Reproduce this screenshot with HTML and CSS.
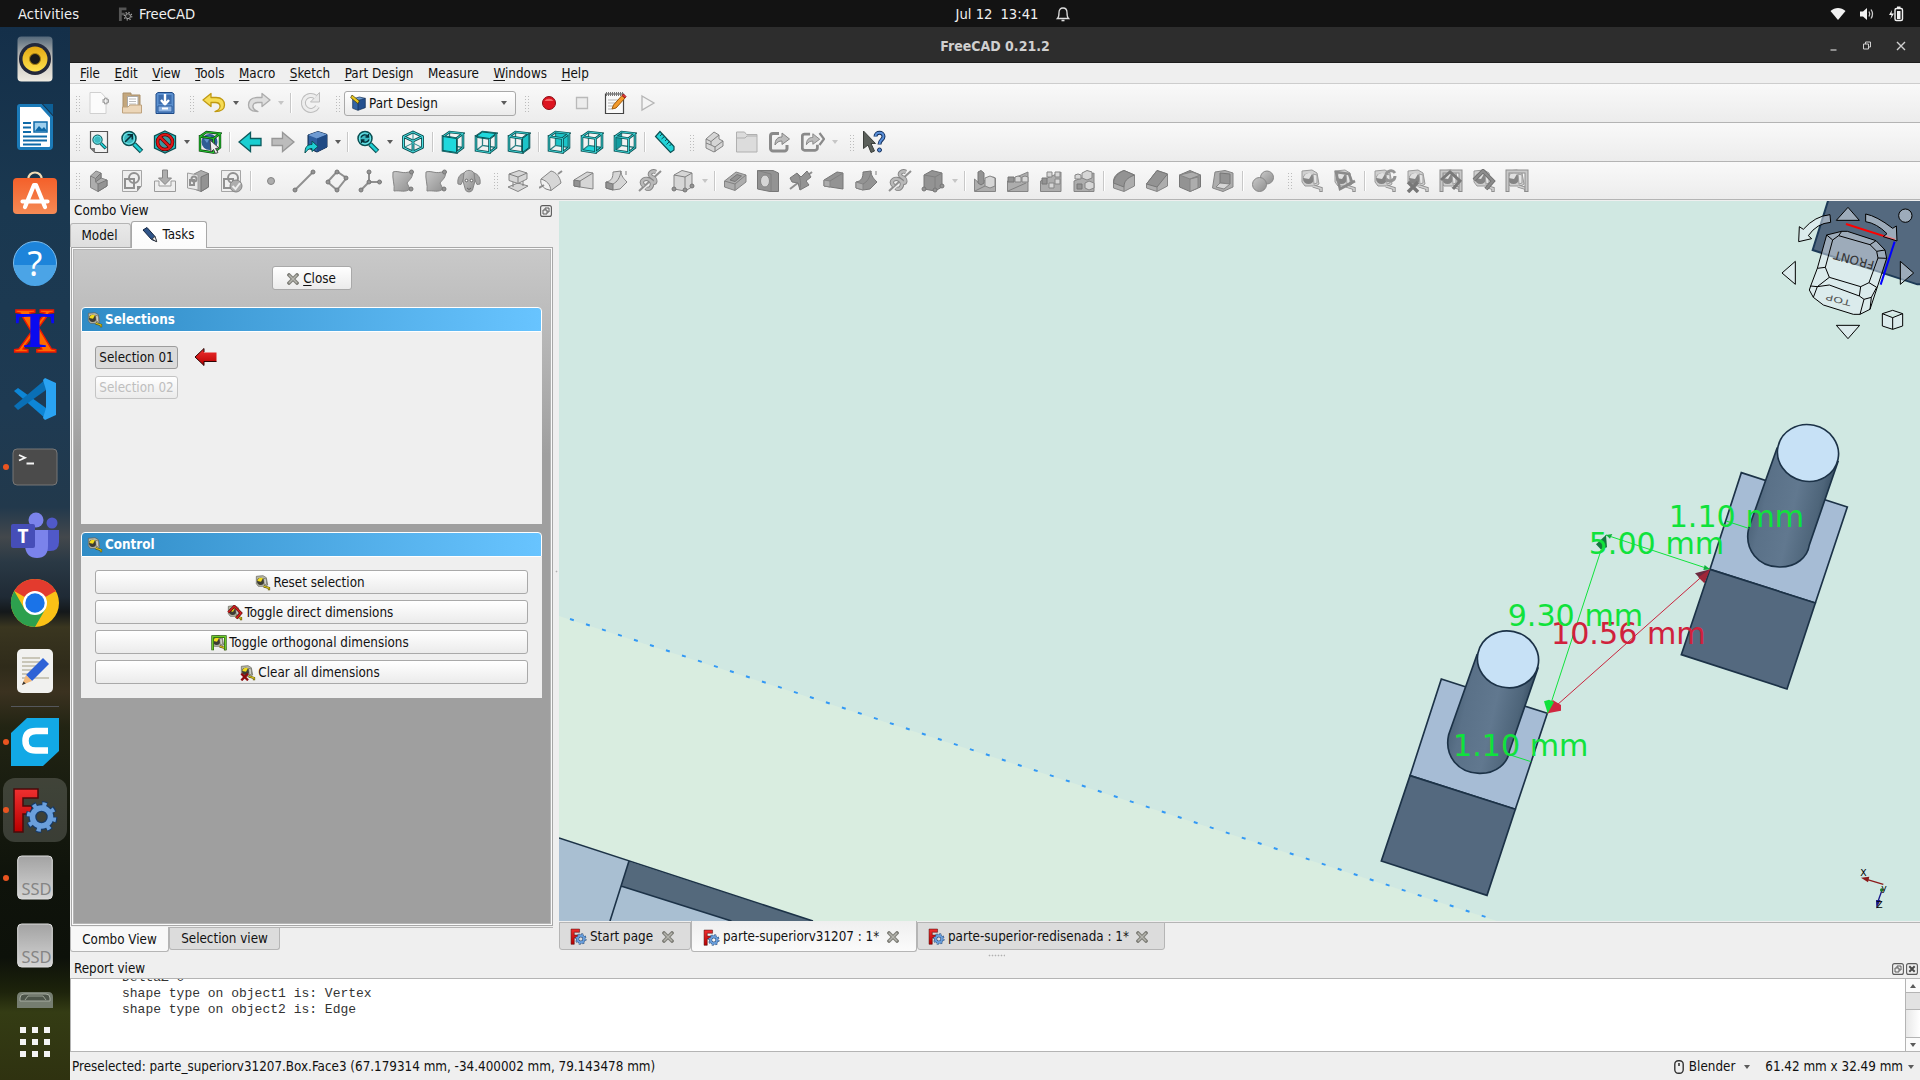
FILE: index.html
```html
<!DOCTYPE html>
<html lang="en">
<head>
<meta charset="utf-8">
<title>FreeCAD 0.21.2</title>
<link rel="stylesheet" href="styles.css">
</head>
<body>
<svg class="defs" width="0" height="0" aria-hidden="true">
<defs>
<linearGradient id="gCyl" x1="0" y1="0" x2="1" y2=".3"><stop offset="0" stop-color="#3a5064"/><stop offset=".3" stop-color="#5a7188"/><stop offset=".6" stop-color="#61788f"/><stop offset=".85" stop-color="#4e657a"/><stop offset="1" stop-color="#30465a"/></linearGradient>
<linearGradient id="gGray" x1="0" y1="0" x2="1" y2="1"><stop offset="0" stop-color="#c9c9c9"/><stop offset="1" stop-color="#8e8e8e"/></linearGradient>
<linearGradient id="gSpk" x1="0" y1="0" x2="0" y2="1"><stop offset="0" stop-color="#54687a"/><stop offset=".5" stop-color="#c8c5be"/><stop offset="1" stop-color="#efebe2"/></linearGradient>
<linearGradient id="gYel" x1="0" y1="0" x2="0" y2="1"><stop offset="0" stop-color="#e3a712"/><stop offset="1" stop-color="#ffe14d"/></linearGradient>
<linearGradient id="gStore" x1="0" y1="0" x2="0" y2="1"><stop offset="0" stop-color="#f4602a"/><stop offset="1" stop-color="#f58a55"/></linearGradient>
<linearGradient id="gSsd" x1="0" y1="0" x2="0" y2="1"><stop offset="0" stop-color="#a3a3a3"/><stop offset="1" stop-color="#d4d4d4"/></linearGradient>
<linearGradient id="gRed" x1="0" y1="0" x2="0" y2="1"><stop offset="0" stop-color="#f03030"/><stop offset="1" stop-color="#b80000"/></linearGradient>

<path id="wire" d="M2 6.500L15.500 8.500V22.500L2 20.500ZM2 6.500L8.500 2L22 3.500L15.500 8.500M22 3.500V17.500L15.500 22.500"/>
<path id="wback" d="M8.500 2V15.500L22 17.500M8.500 15.500L2 20.500"/>

<symbol id="fc" viewBox="0 0 48 48"><path d="M3 3H27V12H12V20H21V28H12V46H3Z" fill="url(#gRed)" stroke="#4a0b0b" stroke-width="1.500"/><g fill="none"><circle cx="30.500" cy="31" r="13" stroke="#173a66" stroke-width="6" stroke-dasharray="5 5.210"/><circle cx="30.500" cy="31" r="9" stroke="#173a66" stroke-width="8"/><circle cx="30.500" cy="31" r="12.500" stroke="#6a9fdc" stroke-width="4.500" stroke-dasharray="4 5.820" stroke-dashoffset="-.5"/><circle cx="30.500" cy="31" r="9" stroke="#6a9fdc" stroke-width="5.500"/></g></symbol>

<symbol id="i-new" viewBox="0 0 24 24"><path d="M3 1.500H14L19 7V22.500H3Z" fill="#fbfbfb" stroke="#d0d0d0"/><path d="M15.500 10H22M18.800 6.800V13.200" stroke="#9a9a9a" stroke-width="3.400"/><path d="M16.500 10H21M18.800 7.800V12.200" stroke="#fff" stroke-width="1.200"/></symbol>
<symbol id="i-open" viewBox="0 0 24 24"><path d="M3 2H11V4H20V19H3Z" fill="#c4a77d" stroke="#a98f6b"/><path d="M7.500 5.500H18V17H7.500Z" fill="#fff" stroke="#aaa"/><path d="M9 8H16M9 10.500H16M9 13H16" stroke="#bbb"/><path d="M2.500 16H8L10 14H21.500V22H2.500Z" fill="#ecd6b8" stroke="#bfa27d"/></symbol>
<symbol id="i-save" viewBox="0 0 24 24"><path d="M3 3L5 1.500H19L21 3V22.500H3Z" fill="#5b8fce" stroke="#1f4a87"/><path d="M5.500 4H18.500V13H5.500Z" fill="#3b6cae"/><path d="M12 3V13M8 9L12 13.500L16 9" fill="none" stroke="#fff" stroke-width="2.400"/><path d="M5 15H19V21H5Z" fill="#8cb2e2" stroke="#2a5a9c"/><path d="M9 17.500H15" stroke="#fff" stroke-width="2"/></symbol>
<symbol id="i-undo" viewBox="0 0 24 24"><path d="M1 9L9 2.500V6.500H14C20 6.500 22.500 10 22.500 14C22.500 18.500 18.500 20.500 13 20.500C17 19 18.500 17 18 14.500C17.500 12.500 16 11.500 13.500 11.500H9V15.500Z" fill="#f6dc55" stroke="#c09a12" stroke-width="1.300" stroke-linejoin="round"/></symbol>
<symbol id="i-redo" viewBox="0 0 24 24"><path d="M23 9L15 2.500V6.500H10C4 6.500 1.500 10 1.500 14C1.500 18.500 5.500 20.500 11 20.500C7 19 5.500 17 6 14.500C6.500 12.500 8 11.500 10.500 11.500H15V15.500Z" fill="#dedede" stroke="#acacac" stroke-width="1.300" stroke-linejoin="round"/></symbol>
<symbol id="i-ref" viewBox="0 0 24 24"><path d="M18.500 15.500A7.500 7.500 0 1 1 16.500 6" fill="none" stroke="#bdbdbd" stroke-width="5"/><path d="M20.500 1.500V11H11.500Z" fill="#e8e8e8" stroke="#bdbdbd"/><path d="M18.500 15.500A7.500 7.500 0 1 1 16.500 6" fill="none" stroke="#ededed" stroke-width="3"/></symbol>
<symbol id="i-pd" viewBox="0 0 24 24"><path d="M4 6L12 8V23L4 20Z" fill="#3465a4"/><path d="M12 8L23 5V19L12 23Z" fill="#234f8e"/><path d="M4 6L14 3L23 5L12 8Z" fill="#6f9ed6"/><path d="M4 6L14 3L23 5V19L12 23L4 20ZM12 8V23M12 8L23 5" fill="none" stroke="#0f2a50"/><path d="M3 0L14 9L12 13L1 4Z" fill="#e8c51c" stroke="#3a3208"/></symbol>
<symbol id="i-rec" viewBox="0 0 24 24"><circle cx="12" cy="12" r="6.500" fill="#dd1420" stroke="#8d0b12"/><path d="M7.500 10A5 4 0 0 1 16.500 10Z" fill="#f56a6a"/></symbol>
<symbol id="i-stop" viewBox="0 0 24 24"><path d="M6.500 6.500H17.500V17.500H6.500Z" fill="#ececec" stroke="#b9b9b9" stroke-width="1.300"/></symbol>
<symbol id="i-mac" viewBox="0 0 24 24"><path d="M2.500 3H20.500V22.500H2.500Z" fill="#fafafa" stroke="#444" stroke-width="1.200"/><path d="M3 3H20" stroke="#777" stroke-width="4" stroke-dasharray="1 1"/><path d="M5 9H17M5 12H15M5 15H10M5 18H9" stroke="#b5b5b5"/><path d="M9 18L10.500 14L19 4.500L22 7L13 17Z" fill="#f39a2b" stroke="#9d5a0c"/><path d="M19 4.500L20.500 3L23 5.500L22 7Z" fill="#e33" stroke="#922"/></symbol>
<symbol id="i-play" viewBox="0 0 24 24"><path d="M6 5L18 12L6 19Z" fill="#f4f4f4" stroke="#b5b5b5" stroke-width="1.300"/></symbol>

<symbol id="mag" viewBox="0 0 24 24"><path d="M14 14L21.500 21.500" stroke="#0b4f52" stroke-width="5"/><path d="M14 14L21 21" stroke="#1fcfd3" stroke-width="2.600"/><circle cx="9" cy="8.500" r="7" fill="#3bb9c0" stroke="#0b4f52" stroke-width="1.500"/><circle cx="9" cy="8.500" r="5.500" fill="none" stroke="#6fe5e8" stroke-width="1.200"/></symbol>
<symbol id="i-fit" viewBox="0 0 24 24"><path d="M3.500 1.500H20.500V22.500H8L3.500 18Z" fill="#f2f2f2" stroke="#555" stroke-width="1.200"/><path d="M3.500 18H8V22.500Z" fill="#777"/><use href="#mag" x="4.500" y="4" width="16" height="16"/></symbol>
<symbol id="i-fits" viewBox="0 0 24 24"><use href="#mag" width="24" height="24"/><path d="M5 12L12 5M7.500 4.800H12.300V9.500" fill="none" stroke="#062f38" stroke-width="1.600"/></symbol>
<symbol id="i-ds" viewBox="0 0 24 24"><path d="M12 1L22.500 6V18L12 23L1.500 18V6Z" fill="#22c3c7" stroke="#0b4f52" stroke-width="1.300"/><circle cx="12" cy="12" r="7.500" fill="#4c7b80" fill-opacity=".6" stroke="#5b0000" stroke-width="3.600"/><path d="M7 7L17 17" stroke="#5b0000" stroke-width="3.600"/><circle cx="12" cy="12" r="7.500" fill="none" stroke="#e01818" stroke-width="2.200"/><path d="M7 7L17 17" stroke="#e01818" stroke-width="2.200"/></symbol>
<symbol id="i-bb" viewBox="0 0 24 24"><circle cx="11.500" cy="12" r="8" fill="#2f5c94"/><path d="M6 9A6 5 0 0 1 13 6L9 13Z" fill="#5f93cc"/><g fill="none"><use href="#wire" stroke="#0a3d0e" stroke-width="2.400"/><use href="#wire" stroke="#22c32e" stroke-width="1.200"/></g><path d="M12 10L21 18L17.500 18.500L20 22.500L17.500 23.500L15.500 19.500L13 22Z" fill="#eee" stroke="#444"/></symbol>
<symbol id="i-back" viewBox="0 0 24 24"><path d="M1 12L12.500 2.500V8.500H23V15.500H12.500V21.500Z" fill="#19cfd2" stroke="#0c5a5d" stroke-width="1.300"/></symbol>
<symbol id="i-fwd" viewBox="0 0 24 24"><path d="M23 12L11.500 2.500V8.500H1V15.500H11.500V21.500Z" fill="#bcbcbc" stroke="#979797" stroke-width="1.300"/></symbol>
<symbol id="i-ln" viewBox="0 0 24 24"><path d="M4 5L14 1.500L23 4.500V17L13 22L4 18Z" fill="#2f5f9f" stroke="#0d2748"/><path d="M4 5L14 1.500L23 4.500L13 8.500Z" fill="#6f9bd2"/><path d="M13 8.500L23 4.500V17L13 22Z" fill="#204a84"/><path d="M1 23C1 17 3 14.500 8 14.500V11L14 16.500L8 21.500V18.500C5 18.500 3 20 1 23Z" fill="#1fcfd3" stroke="#0b4f52"/></symbol>
<symbol id="i-zm" viewBox="0 0 24 24"><use href="#mag" width="24" height="24"/><path d="M5 7.500A4 4 0 0 1 12 6.500M13 9.500A4 4 0 0 1 6 10.500M12.500 4V7H9.500M5.500 13V10H8.500" fill="none" stroke="#062f38" stroke-width="1.400"/></symbol>
<symbol id="i-iso" viewBox="0 0 24 24"><g fill="none" stroke-linejoin="round"><path d="M12 2L21.500 6.500V17.500L12 22L2.500 17.500V6.500ZM2.500 6.500L12 11L21.500 6.500M12 11V22" stroke="#0b4f52" stroke-width="2.800"/><path d="M12 3V11M4 17L12 13L20 17" stroke="#2a8f92"/><path d="M12 2L21.500 6.500V17.500L12 22L2.500 17.500V6.500ZM2.500 6.500L12 11L21.500 6.500M12 11V22" stroke="#4be0e3"/></g></symbol>
<symbol id="i-wire" viewBox="0 0 24 24"><g fill="none"><use href="#wback" stroke="#2a8083" stroke-width="1.300"/><use href="#wire" stroke="#0b5254" stroke-width="2.600"/><use href="#wire" stroke="#3fdcdf" stroke-width=".9"/></g></symbol>
<symbol id="i-vf" viewBox="0 0 24 24"><use href="#i-wire" width="24" height="24"/><path d="M2 6.500L15.500 8.500V22.500L2 20.500Z" fill="#1fd8dc" stroke="#0b5254"/></symbol>
<symbol id="i-vt" viewBox="0 0 24 24"><use href="#i-wire" width="24" height="24"/><path d="M2 6.500L8.500 2L22 3.500L15.500 8.500Z" fill="#1fd8dc" stroke="#0b5254"/></symbol>
<symbol id="i-vr" viewBox="0 0 24 24"><use href="#i-wire" width="24" height="24"/><path d="M22 3.500V17.500L15.500 22.500V8.500Z" fill="#1cc4c8" stroke="#0b5254"/></symbol>
<symbol id="i-vb" viewBox="0 0 24 24"><path d="M8.500 2L22 3.500V17.500L8.500 15.500Z" fill="#1cc4c8"/><use href="#i-wire" width="24" height="24"/></symbol>
<symbol id="i-vo" viewBox="0 0 24 24"><path d="M2 20.500L8.500 15.500L22 17.500L15.500 22.500Z" fill="#1fd8dc"/><use href="#i-wire" width="24" height="24"/></symbol>
<symbol id="i-vl" viewBox="0 0 24 24"><path d="M2 6.500L8.500 2V15.500L2 20.500Z" fill="#149ea2"/><use href="#i-wire" width="24" height="24"/></symbol>
<symbol id="i-rul" viewBox="0 0 24 24"><path d="M7 1.500L21 16.500V20L17.500 22.500L2.500 6.500Z" fill="#22d3d7" stroke="#0b4f52" stroke-width="1.200"/><path d="M9 4L7 6M11.500 6.500L8.500 9M14 9L12 11M16.500 11.500L13.500 14.500M18.500 14L16.500 16" stroke="#0b4f52"/></symbol>
<symbol id="i-part" viewBox="0 0 24 24"><path class="gl" d="M4 9L12 2L17 5V9L21 11V16L12 22L4 18Z"/><path class="gn" d="M4 9L9 11.500L17 5M9 11.500V15L13 17L21 11M13 17V22M4 13L9 15"/></symbol>
<symbol id="i-grp" viewBox="0 0 24 24"><path d="M1.500 2H9.500L11.500 4.500H22V22H1.500Z" fill="#dcdcdc" stroke="#b0b0b0"/><path d="M1.500 8H10L12 6H22" fill="none" stroke="#b0b0b0"/></symbol>
<symbol id="i-lk" viewBox="0 0 24 24"><path d="M11 3.500H5A2.500 2.500 0 0 0 2.500 6V18.500A2.500 2.500 0 0 0 5 21H16.500A2.500 2.500 0 0 0 19 18.500V15" fill="none" stroke="#8a8a8a" stroke-width="3"/><path d="M7 15C7 9.500 9.500 7 14 7V3L21.500 9L14 14.500V11C11 11 9 12 7 15Z" fill="#bcbcbc" stroke="#858585"/></symbol>
<symbol id="i-lkg" viewBox="0 0 24 24"><use href="#i-lk" x="-1" width="22" height="24"/><path d="M18.500 3L23 9L18.500 15" fill="none" stroke="#8a8a8a" stroke-width="2.200"/></symbol>
<symbol id="i-wt" viewBox="0 0 24 24"><path d="M1.500 1L13.500 13.500L9 13.500L12.500 21L9 22.500L6 15L1.500 18.500Z" fill="#5b605b" stroke="#3b3f3b"/><path d="M13.500 6.500C13.500 1.500 21.500 1.500 21.500 6.500C21.500 10 17.500 9.800 17.500 14.500" fill="none" stroke="#14305c" stroke-width="4"/><path d="M13.500 6.500C13.500 1.500 21.500 1.500 21.500 6.500C21.500 10 17.500 9.800 17.500 14" fill="none" stroke="#5a8fd8" stroke-width="2"/><circle cx="17.500" cy="20" r="2" fill="#5a8fd8" stroke="#14305c"/></symbol>

<symbol id="g-body" viewBox="0 0 24 24"><path class="g" d="M3.500 7L9 2L14 4V9L20 11V17L11 22.500L3.500 18.500Z"/><path class="gd" d="M11 15L20 11V17L11 22.500ZM8.500 9.500L14 4V9L8.500 13Z"/><path class="gn" d="M3.500 7L8.500 9.500V13L11 15"/></symbol>
<symbol id="g-sk" viewBox="0 0 24 24"><path d="M2.500 1.500H21.500V17L17 22.500H2.500Z" fill="#efefef" stroke="#a5a5a5"/><path d="M21.500 17H17V22.500Z" fill="#8e8e8e"/><path class="gt" d="M5 10H14V19H5Z"/><circle class="gt" cx="14" cy="9" r="5"/></symbol>
<symbol id="g-imp" viewBox="0 0 24 24"><path d="M1.500 12H6V17H18V12H22.500V22.500H1.500Z" fill="#eee" stroke="#9b9b9b"/><path class="g" d="M9.500 1H14.500V9H18.500L12 15.500L5.500 9H9.500Z"/></symbol>
<symbol id="g-map" viewBox="0 0 24 24"><path class="g" d="M8 5L15 1.500L22.500 4.500V18L15 22.500L8 20Z"/><path class="gd" d="M15 8L22.500 4.500V18L15 22.500Z"/><path d="M1.500 4L12 6V21L1.500 19Z" fill="#eaeaea" stroke="#a0a0a0"/><circle class="gt" cx="8" cy="10" r="2.500"/><path class="gt" d="M4 11H8V16H4Z"/></symbol>
<symbol id="g-val" viewBox="0 0 24 24"><use href="#g-sk" width="24" height="24"/><circle class="g" cx="17" cy="17" r="6"/><path d="M13.500 17L16.500 20L21 14" fill="none" stroke="#eee" stroke-width="2"/></symbol>
<symbol id="g-pt" viewBox="0 0 24 24"><circle class="g" cx="12" cy="12" r="3.500"/></symbol>
<symbol id="g-ln" viewBox="0 0 24 24"><path class="gt" d="M3 21L21 3"/><circle class="gd" cx="3" cy="21" r="2"/><circle class="gd" cx="21" cy="3" r="2"/></symbol>
<symbol id="g-pl" viewBox="0 0 24 24"><path class="gt" d="M12 2.500L21.500 9L12 21L2.500 13Z"/><circle class="gd" cx="12" cy="3" r="2"/><circle class="gd" cx="21" cy="9" r="2"/><circle class="gd" cx="12" cy="21" r="2"/><circle class="gd" cx="3" cy="13" r="2"/></symbol>
<symbol id="g-cs" viewBox="0 0 24 24"><path class="gt" d="M11 2V13L3 21M11 13H22"/><circle class="gd" cx="11" cy="3" r="2"/><circle class="gd" cx="11" cy="13" r="2"/><circle class="gd" cx="3" cy="21" r="2"/><circle class="gd" cx="21.500" cy="13" r="2"/></symbol>
<symbol id="g-sb" viewBox="0 0 24 24"><path d="M2 3C8 1 11 6 21 2C23 8 18 11 16 14L19 20C14 24 9 21 3 22C4 16 1 10 2 3Z" fill="url(#gGray)" stroke="#858585"/><circle class="gd" cx="20.500" cy="3" r="2"/><circle class="gd" cx="20" cy="20" r="2"/></symbol>
<symbol id="g-sh" viewBox="0 0 24 24"><path d="M7 4C3 5 0 9 1 15L4 15.500L6.500 10ZM17 4C21 5 24 9 23 15L20 15.500L17.500 10Z" fill="#a5a5a5" stroke="#858585"/><path d="M7 4C9 .5 15 .5 17 4L18 12L15.500 21C14 23.500 10 23.500 8.500 21L6 12Z" fill="url(#gGray)" stroke="#858585"/><circle cx="9.500" cy="11.500" r="1.300" fill="#fff" stroke="#666"/><circle cx="14.500" cy="11.500" r="1.300" fill="#fff" stroke="#666"/><path d="M10 19L12 20.500L14 19" fill="none" stroke="#666"/></symbol>
<symbol id="g-pad" viewBox="0 0 24 24"><path class="gl" d="M2 18L12 14L22 17L12 22.500Z"/><path class="gl" d="M3 5L13 1.500L21 4V10L12 14.500L3 11.500Z"/><path class="gn" d="M3 5L12 8L21 4M12 8V14.500M7 13V18M17 12V17"/></symbol>
<symbol id="g-rev" viewBox="0 0 24 24"><path class="gt" d="M0 19L5 16M19 5L23 2"/><path class="gl" d="M2 10L12 2C17 3 21 8 22 14L12 21.500C11 15 8 12 2 10Z"/><path class="gn" d="M2 10C1 14 3 18 7 20L12 21.500"/></symbol>
<symbol id="g-loft" viewBox="0 0 24 24"><path class="gl" d="M2 11L15 3L21 4V20L8 18L2 17Z"/><path class="gd" d="M2 11L8 12V18L2 17Z"/><path class="gn" d="M8 12L21 4"/></symbol>
<symbol id="g-swp" viewBox="0 0 24 24"><path class="gl" d="M8 3L16 2C16 7 19 10 22 13L15 20L8 21L1 19V13C7 12 8 8 8 3Z"/><path class="gd" d="M1 13L8 15V21L1 19Z"/><path class="gn" d="M16 2C15 9 12 13 8 15M21 6V2"/></symbol>
<symbol id="g-hel" viewBox="0 0 24 24"><path class="gt" d="M1 22L23 2"/><path d="M6 17C0 12 8 7 13 12C18 17 19 10 14 8C9 5 14 1 18 3M13 12C16 17 11 22 8 19" fill="none" stroke="#858585" stroke-width="4.400"/><path d="M6 17C0 12 8 7 13 12C18 17 19 10 14 8C9 5 14 1 18 3M13 12C16 17 11 22 8 19" fill="none" stroke="#b9b9b9" stroke-width="2.600"/></symbol>
<symbol id="g-box" viewBox="0 0 24 24"><path class="gl" d="M3 6L11 1.500L21 4V18L14 22L3 20Z"/><path class="gn" d="M3 6L14 8L21 4M14 8V22"/><circle class="gd" cx="3" cy="20" r="2"/><circle class="gd" cx="14" cy="21" r="2"/><circle class="gd" cx="21" cy="17" r="2"/></symbol>
<symbol id="g-pock" viewBox="0 0 24 24"><path class="g" d="M1.500 12L13 3L23 6V13L12 21.500L1.500 18Z"/><path class="gn" d="M1.500 12L12 15L23 6M12 15V21"/><path class="gd" d="M7 11L14 5.500L18.500 7L12 12.500Z"/></symbol>
<symbol id="g-hole" viewBox="0 0 24 24"><path class="gd" d="M1.500 1.500H17L22.500 4V22.500H14L1.500 20Z"/><path class="gn" d="M1.500 1.500L15 5V22.500"/><ellipse class="gl" cx="9" cy="12" rx="4.500" ry="6"/></symbol>
<symbol id="g-grv" viewBox="0 0 24 24"><path class="gt" d="M1 20L23 3"/><path class="gd" d="M1 9L8 4L12 8L18 2L22 8L17 12L20 16L11 21L9 14L3 13Z"/><path class="gn" d="M8 4C12 9 12 14 11 21"/></symbol>
<symbol id="g-sloft" viewBox="0 0 24 24"><path class="gd" d="M2 11L15 3L21 4V20L8 18L2 17Z"/><path class="g" d="M2 11L8 12V18L2 17Z"/><path class="gn" d="M8 12L21 4"/></symbol>
<symbol id="g-sswp" viewBox="0 0 24 24"><path class="gd" d="M8 3L16 2C16 7 19 10 22 13L15 20L8 21L1 19V13C7 12 8 8 8 3Z"/><path class="g" d="M1 13L8 15V21L1 19Z"/><path class="gn" d="M16 2C15 9 12 13 8 15M21 6V2"/></symbol>
<symbol id="g-sbox" viewBox="0 0 24 24"><path class="gd" d="M3 6L11 1.500L21 4V18L14 22L3 20Z"/><path class="gn" d="M3 6L14 8L21 4M14 8V22"/><circle class="gd" cx="3" cy="20" r="2"/><circle class="gd" cx="14" cy="21" r="2"/><circle class="gd" cx="21" cy="17" r="2"/></symbol>
<symbol id="g-mir" viewBox="0 0 24 24"><path class="g" d="M1.500 10L6 14L20 8L22.500 9V22.500H1.500Z"/><path class="gd" d="M5 3L8 1.500L11 4V14L8 16L5 14Z"/><path class="gl" d="M12 9L17 7L22 9V17L17 19L12 17Z"/><path class="gn" d="M2 22L12 17"/></symbol>
<symbol id="g-lin" viewBox="0 0 24 24"><path class="g" d="M1.500 12L22 3V22.500H1.500Z"/><path class="gd" d="M2 8H8V13H2Z"/><path class="gl" d="M9 8L12 7L15 8V13H9ZM16 8L19 7L22 8V13H16Z"/><path class="gn" d="M2 22L20 14"/></symbol>
<symbol id="g-pol" viewBox="0 0 24 24"><path class="g" d="M1.500 12L22 3V22.500H1.500Z"/><path class="gl" d="M8 3H13V8H8ZM16 3H21V8H16ZM10 14H15V19H10ZM16 10H21V15H16Z"/><path class="gd" d="M3 9H8V15H3Z"/></symbol>
<symbol id="g-mul" viewBox="0 0 24 24"><path class="g" d="M2 12L22 4V22.500H2Z"/><path class="gl" d="M10 4L15 1.500L20 3V9L15 11L10 9ZM13 14L17 12L22 14V19L17 21L13 19Z"/><path class="gl" d="M3 6L6 5L9 6V10H3Z"/><path class="gd" d="M5 15H10V20H5Z"/></symbol>
<symbol id="g-fil" viewBox="0 0 24 24"><path class="g" d="M1.500 19V12C2 6 7 3 12 1.500L22.500 6V17L12 22.500Z"/><path class="gd" d="M1.500 14C2 8 6 4 12 1.500L22.500 6C15 9 12 12 12 18Z"/><path class="gn" d="M12 18V22"/></symbol>
<symbol id="g-cha" viewBox="0 0 24 24"><path class="g" d="M1.500 19V15L12 1.500L22.500 5V17L12 22.500Z"/><path class="gd" d="M1.500 15L12 1.500L22.500 5L12 18Z"/><path class="gn" d="M12 18V22"/></symbol>
<symbol id="g-dra" viewBox="0 0 24 24"><path class="gd" d="M1.500 6L12 1.500L22.500 6V18L12 22.500L1.500 18Z"/><path class="g" d="M1.500 6L14 3L22.500 6L12 10ZM12 10V22.500L20 19V8Z"/></symbol>
<symbol id="g-thk" viewBox="0 0 24 24"><path class="g" d="M4 3L14 1.500L22 4V18L12 22.500L1.500 19Z"/><path class="gd" d="M9 4L19 5V15L9 14Z"/><path class="gl" d="M9 14L19 15L13 20L5 18Z"/></symbol>
<symbol id="g-boo" viewBox="0 0 24 24"><circle cx="16" cy="8.500" r="6.500" fill="url(#gGray)" stroke="#888"/><circle cx="8.500" cy="15.500" r="7" fill="url(#gGray)" stroke="#888"/></symbol>

<symbol id="tape" viewBox="0 0 24 24"><path d="M2 2L12 1L17 4L19 15L16 17L5 17L2 13Z" fill="#b8b8a6" stroke="#5e5e56"/><circle cx="8.500" cy="9.500" r="5.500" fill="#3c3c34"/><path d="M3.500 9A5.500 5.500 0 0 1 12 5L9 10Z" fill="#f2dc1c"/><path d="M13 5L17 6V14L14 15Z" fill="#dadad2" stroke="#66665c"/><path d="M13 17L21 19.500V23" fill="none" stroke="#5d5208" stroke-width="3.400"/><path d="M13 17L21 19.500V22" fill="none" stroke="#d6c21e" stroke-width="1.600"/></symbol>
<symbol id="t-dia" viewBox="0 0 24 24"><use href="#tape" width="24" height="24"/><path d="M2 11L11 2L21 12L14 20" fill="none" stroke="#5a0b0b" stroke-width="4"/><path d="M2 11L11 2L21 12L14 20" fill="none" stroke="#d42020" stroke-width="2.200"/></symbol>
<symbol id="t-ort" viewBox="0 0 24 24"><use href="#tape" width="24" height="24"/><path d="M2.500 23V2.500H21.500V23" fill="none" stroke="#245c0b" stroke-width="4"/><path d="M2.500 22V2.500H21.500V22" fill="none" stroke="#6fca2a" stroke-width="2"/></symbol>
<symbol id="t-x" viewBox="0 0 24 24"><use href="#tape" width="24" height="24"/><path d="M2 13L12 23M12 13L2 23" stroke="#8d0b0b" stroke-width="3.500"/></symbol>
<symbol id="t-ang" viewBox="0 0 24 24"><use href="#tape" width="24" height="24"/><path d="M3 3L16 5L19 13L7 20ZM7 20L22 12" fill="none" stroke="#444" stroke-width="2.600"/></symbol>
<symbol id="t-ref" viewBox="0 0 24 24"><use href="#tape" width="24" height="24"/><path d="M13 6A5 5 0 0 1 22 4M22 7A5 5 0 0 1 13 10" fill="none" stroke="#555" stroke-width="3"/></symbol>
<symbol id="t-all" viewBox="0 0 24 24"><use href="#t-ort" width="24" height="24"/><path d="M2 11L11 3L21 12L14 20" fill="none" stroke="#5a1b1b" stroke-width="3"/></symbol>

<symbol id="x" viewBox="0 0 12 12"><path d="M2 2L10 10M10 2L2 10" stroke="#80807a" stroke-width="3.600" stroke-linecap="square"/><path d="M2 2L10 10M10 2L2 10" stroke="#b5b5ae" stroke-width="1.400"/></symbol>
<symbol id="flt" viewBox="0 0 12 12"><rect x=".6" y=".6" width="10.800" height="10.800" rx="2" fill="none" stroke="#5b5b5b" stroke-width="1.100"/><path d="M3 5H7V9H3ZM5 5V3H9V7H7" fill="none" stroke="#5b5b5b"/></symbol>
<symbol id="cls" viewBox="0 0 12 12"><rect x=".6" y=".6" width="10.800" height="10.800" rx="2" fill="none" stroke="#5b5b5b" stroke-width="1.100"/><path d="M3.300 3.300L8.700 8.700M8.700 3.300L3.300 8.700" stroke="#4b4b4b" stroke-width="2"/></symbol>
</defs>
</svg>

<div class="desktop">
<header class="topbar">
  <span class="tb-act">Activities</span>
  <svg class="tb-ico" viewBox="0 0 48 48"><path d="M3 3H27V12H12V20H21V28H12V46H3Z" fill="#555"/><circle cx="32" cy="31" r="12" fill="none" stroke="#aaa" stroke-width="4" stroke-dasharray="4 5.420"/><circle cx="32" cy="31" r="8" fill="#222" stroke="#aaa" stroke-width="3"/></svg>
  <span class="tb-app">FreeCAD</span>
  <span class="tb-clock"><span>Jul 12</span><span>13:41</span><svg width="14" height="16" viewBox="0 0 14 16"><path d="M1.500 12.500C3 11 3 9 3 6.500C3 3.500 4.500 2 7 2S11 3.500 11 6.500C11 9 11 11 12.500 12.500Z" fill="none" stroke="#ddd" stroke-width="1.300"/><path d="M5.500 14.500H8.500" stroke="#ddd" stroke-width="1.600"/></svg></span>
  <span class="tb-sys">
    <svg width="16" height="14" viewBox="0 0 16 14"><path d="M8 13L.5 4C5 0 11 0 15.500 4Z" fill="#f2f2f2"/></svg>
    <svg width="16" height="14" viewBox="0 0 16 14"><path d="M1 4.500H4L8 1V13L4 9.500H1Z" fill="#f2f2f2"/><path d="M10 4.500Q11.500 7 10 9.500M12 2.500Q15 7 12 11.500" fill="none" stroke="#ccc" stroke-width="1.300"/></svg>
    <svg width="17" height="16" viewBox="0 0 17 16"><rect x="7" y="2.500" width="7.500" height="12" rx="1.500" fill="none" stroke="#f2f2f2" stroke-width="1.400"/><path d="M9 1.500H12.500" stroke="#f2f2f2" stroke-width="2"/><path d="M9 5H12.500V13H9Z" fill="#f2f2f2"/><path d="M4 4L1 9H3.500L2.500 13L6 7.500H3.500Z" fill="#f2f2f2"/></svg>
  </span>
</header>

<div class="main">
<nav class="dock">
  <div class="di"><svg width="36" height="46" viewBox="0 0 36 46"><rect x=".5" y=".5" width="35" height="45" rx="4" fill="url(#gSpk)"/><circle cx="18" cy="23" r="16" fill="#23283a"/><circle cx="18" cy="23" r="12.500" fill="url(#gYel)"/><circle cx="18" cy="23" r="5.500" fill="#1a1a1a" stroke="#a98212"/></svg></div>
  <div class="di"><svg width="36" height="46" viewBox="0 0 36 46"><path d="M3 1.500H24L34.500 13V42Q34.500 44.500 32 44.500H3.500Q1.500 44.500 1.500 42V3Q1.500 1.500 3 1.500Z" fill="#fff" stroke="#1b7ab8" stroke-width="3"/><path d="M26 0H36V11Z" fill="#0d5f96"/><path d="M6 19H14M6 23.500H14M6 28H14M6 32.500H30M6 36.500H30M6 40.500H24" stroke="#0f6aa8" stroke-width="2.200"/><rect x="17" y="18" width="13" height="10" fill="#9fd0ee" stroke="#0f6aa8" stroke-width="1.500"/><path d="M18 27L22 22L25 25L27 23L30 27Z" fill="#0f6aa8"/></svg></div>
  <div class="di store"><svg width="46" height="44" viewBox="0 0 46 44"><path d="M16 9C16 -1 30 -1 30 9" fill="none" stroke="#f2dcb5" stroke-width="2.200"/><rect x="1" y="7" width="44" height="36" rx="4" fill="url(#gStore)"/><path d="M13 36L22 14H24L33 36M10.500 30.500H35.500" fill="none" stroke="#fff" stroke-width="4.200" stroke-linejoin="round" stroke-linecap="round"/></svg></div>
  <div class="di"><svg width="46" height="46" viewBox="0 0 46 46"><circle cx="23" cy="23" r="21.500" fill="#1d84da" stroke="#7dbdee"/><path d="M2 25H44A21 21 0 0 1 2 25Z" fill="#4ba4e6"/><text class="q" x="23" y="36" text-anchor="middle">?</text></svg></div>
  <div class="di"><svg width="46" height="46" viewBox="0 0 46 46"><text class="xx" x="23" y="44" text-anchor="middle" textLength="43" lengthAdjust="spacingAndGlyphs">X</text><text class="tt" x="23" y="39" text-anchor="middle" textLength="40" lengthAdjust="spacingAndGlyphs">T</text></svg></div>
  <div class="di"><svg width="44" height="44" viewBox="0 0 44 44"><path d="M1 14L5 11L33 31V42Z" fill="#0d86d6"/><path d="M1 29L5 33L33 13V2Z" fill="#0a6fb5"/><path d="M32 1L43 6V38L32 43L30 41L33 31V13L30 3Z" fill="#2aa3f2"/></svg></div>
  <div class="di"><i class="run"></i><svg width="46" height="38" viewBox="0 0 46 38"><rect x="1" y="1" width="44" height="36" rx="4" fill="#4b4b4b" stroke="#777"/><path d="M7 7L13 9.700L7 12.500M14.500 15.500H22" fill="none" stroke="#f5f5f5" stroke-width="1.800"/></svg></div>
  <div class="di"><svg width="50" height="48" viewBox="0 0 50 48"><circle cx="42" cy="12" r="5.500" fill="#5059c9"/><path d="M30 19H49V31Q49 40 40 40H30Z" fill="#5059c9"/><circle cx="26" cy="9" r="7.500" fill="#7b83eb"/><path d="M16 19H38V35Q38 47 27 47T15 35Z" fill="#7b83eb"/><rect x="1" y="13" width="24" height="24" rx="2" fill="#464eb8"/><text class="tm" x="13" y="32" text-anchor="middle">T</text></svg></div>
  <div class="di"><svg width="48" height="48" viewBox="0 0 48 48"><circle cx="24" cy="24" r="24" fill="#fbc116"/><path d="M24 24L3.200 12A24 24 0 0 1 44.800 12Z" fill="#e33b2e"/><path d="M3.200 12A24 24 0 0 0 24 48L34.400 30L24 24L13.600 30Z" fill="#2da04e"/><path d="M24 12H44.800" stroke="#e33b2e"/><circle cx="24" cy="24" r="12" fill="#fff"/><circle cx="24" cy="24" r="9.700" fill="#1a73e8"/></svg></div>
  <div class="di"><svg width="36" height="46" viewBox="0 0 36 46"><rect y="1" width="36" height="44" rx="5" fill="#f1f1ef"/><path d="M5 10H23M5 14H28M5 18H24M5 22H22M5 26H18M5 30H32" stroke="#c9c6b8" stroke-width="1.800"/><path d="M9 27L26 10L32 16L15 33Z" fill="#2e62d6"/><path d="M5 37L9 27L15 33Z" fill="#f2b87a"/><path d="M5 37L6.500 33.500L8.800 35.500Z" fill="#333"/></svg></div>
  <div class="dsep"></div>
  <div class="di"><i class="run"></i><svg width="48" height="48" viewBox="0 0 48 48"><path d="M16 0H48V33L32 48H0V15Z" fill="#12a9e6"/><path d="M37 13H25Q14.500 13 14.500 22.800T25 32.500H37" fill="none" stroke="#fff" stroke-width="6.500"/></svg></div>
  <div class="di on"><i class="run"></i><svg width="48" height="48"><use href="#fc"/></svg></div>
  <div class="di"><i class="run"></i><svg width="36" height="46" viewBox="0 0 36 46"><rect x=".7" y="1" width="34.600" height="43" rx="4" fill="url(#gSsd)" stroke="#dedede"/><text class="ssd" x="4.500" y="39.500">SSD</text></svg></div>
  <div class="di"><svg width="36" height="46" viewBox="0 0 36 46"><rect x=".7" y="1" width="34.600" height="43" rx="4" fill="url(#gSsd)" stroke="#dedede"/><text class="ssd" x="4.500" y="39.500">SSD</text></svg></div>
  <div class="trash"><svg width="36" height="16" viewBox="0 0 36 16"><path d="M0 16V5Q0 0 5 0H31Q36 0 36 5V16Z" fill="#757d70"/><path d="M3 9V6Q3 2 7 2H29Q33 2 33 6V9Z" fill="#4d554a" stroke="#a5ab9f"/><path d="M8 8L11 4H26L29 8" fill="none" stroke="#9aa193"/></svg></div>
  <svg class="apps" width="30" height="30" viewBox="0 0 30 30"><path d="M0 3H30M0 15H30M0 27H30" stroke="#f4f4f4" stroke-width="6" stroke-dasharray="6 6"/></svg>
</nav>

<section class="win">
  <div class="title"><span class="tname">FreeCAD 0.21.2</span><svg class="wbtn" width="80" height="12" viewBox="0 0 80 12"><path d="M1.500 10H7.500" stroke="#d0d0d0" stroke-width="1.200"/><path d="M34.500 4H39.500V9H34.500ZM36.500 4V2H41.500V7H39.500" fill="none" stroke="#d0d0d0"/><path d="M68 2L76 10M76 2L68 10" stroke="#d0d0d0" stroke-width="1.400"/></svg></div>
  <div class="menu"><span><u>F</u>ile</span><span><u>E</u>dit</span><span><u>V</u>iew</span><span><u>T</u>ools</span><span><u>M</u>acro</span><span><u>S</u>ketch</span><span><u>P</u>art Design</span><span>Measure</span><span><u>W</u>indows</span><span><u>H</u>elp</span></div>

  <div class="bar">
    <i class="h f"></i><svg><use href="#i-new"/></svg><svg><use href="#i-open"/></svg><svg><use href="#i-save"/></svg>
    <i class="h"></i><svg><use href="#i-undo"/></svg><i class="d"></i><svg><use href="#i-redo"/></svg><i class="d off"></i><i class="s"></i><svg><use href="#i-ref"/></svg>
    <i class="h wide"></i><div class="combo"><svg><use href="#i-pd"/></svg><span>Part Design</span><i class="d"></i></div>
    <i class="h"></i><svg><use href="#i-rec"/></svg><svg><use href="#i-stop"/></svg><svg><use href="#i-mac"/></svg><svg><use href="#i-play"/></svg>
  </div>
  <div class="bar">
    <i class="h f"></i><svg><use href="#i-fit"/></svg><svg><use href="#i-fits"/></svg><svg><use href="#i-ds"/></svg><i class="d"></i><svg><use href="#i-bb"/></svg><i class="s"></i>
    <svg><use href="#i-back"/></svg><svg><use href="#i-fwd"/></svg><svg><use href="#i-ln"/></svg><i class="d"></i><i class="s"></i><svg><use href="#i-zm"/></svg><i class="d"></i><svg><use href="#i-iso"/></svg><i class="s"></i>
    <svg><use href="#i-vf"/></svg><svg><use href="#i-vt"/></svg><svg><use href="#i-vr"/></svg><i class="s"></i><svg><use href="#i-vb"/></svg><svg><use href="#i-vo"/></svg><svg><use href="#i-vl"/></svg><i class="s"></i><svg><use href="#i-rul"/></svg>
    <i class="h"></i><svg><use href="#i-part"/></svg><svg><use href="#i-grp"/></svg><svg><use href="#i-lk"/></svg><svg><use href="#i-lkg"/></svg><i class="d off"></i><i class="h"></i><svg><use href="#i-wt"/></svg>
  </div>
  <div class="bar last">
    <i class="h f"></i><svg><use href="#g-body"/></svg><svg><use href="#g-sk"/></svg><svg><use href="#g-imp"/></svg><svg><use href="#g-map"/></svg><svg><use href="#g-val"/></svg><i class="s"></i>
    <svg><use href="#g-pt"/></svg><svg><use href="#g-ln"/></svg><svg><use href="#g-pl"/></svg><svg><use href="#g-cs"/></svg><svg><use href="#g-sb"/></svg><svg><use href="#g-sb"/></svg><svg><use href="#g-sh"/></svg><i class="h"></i>
    <svg><use href="#g-pad"/></svg><svg><use href="#g-rev"/></svg><svg><use href="#g-loft"/></svg><svg><use href="#g-swp"/></svg><svg><use href="#g-hel"/></svg><svg><use href="#g-box"/></svg><i class="d off"></i><i class="s"></i>
    <svg><use href="#g-pock"/></svg><svg><use href="#g-hole"/></svg><svg><use href="#g-grv"/></svg><svg><use href="#g-sloft"/></svg><svg><use href="#g-sswp"/></svg><svg><use href="#g-hel"/></svg><svg><use href="#g-sbox"/></svg><i class="d off"></i><i class="s"></i>
    <svg><use href="#g-mir"/></svg><svg><use href="#g-lin"/></svg><svg><use href="#g-pol"/></svg><svg><use href="#g-mul"/></svg><i class="s"></i>
    <svg><use href="#g-fil"/></svg><svg><use href="#g-cha"/></svg><svg><use href="#g-dra"/></svg><svg><use href="#g-thk"/></svg><i class="s"></i><svg><use href="#g-boo"/></svg><i class="h"></i>
    <svg class="dis"><use href="#tape"/></svg><svg class="dis"><use href="#t-ang"/></svg><i class="s"></i><svg class="dis"><use href="#t-ref"/></svg><svg class="dis"><use href="#t-x"/></svg><svg class="dis"><use href="#t-all"/></svg><svg class="dis"><use href="#t-dia"/></svg><svg class="dis"><use href="#t-ort"/></svg>
  </div>

  <div class="work">
    <aside class="side">
      <div class="dtitle"><span>Combo View</span><svg width="12" height="12"><use href="#flt"/></svg></div>
      <div class="tabs"><span class="tab">Model</span><span class="tab sel"><svg width="16" height="16" viewBox="0 0 16 16"><path d="M1 3L5 .5L13 9.500L14.500 14.500L9.500 12.500Z" fill="#2f5488" stroke="#12233f"/><path d="M10 12L13 9.500L14.800 14.800Z" fill="#eee" stroke="#222" stroke-width=".7"/></svg>Tasks</span></div>
      <div class="pane"><div class="inner">
        <button class="btn close"><svg width="12" height="12"><use href="#x"/></svg><span><u>C</u>lose</span></button>
        <div class="group one">
          <div class="ghead"><svg width="16" height="16"><use href="#tape"/></svg>Selections</div>
          <div class="gbody">
            <div class="srow"><button class="btn sb down">Selection 01</button><svg width="23" height="20" viewBox="0 0 23 20"><path d="M1 10L10 1.500V5.500H22.500V14.500H10V18.500Z" fill="url(#gRed)"/><path d="M1 10L10 18.500V14.500H22.500M1 10L10 1.500V5" fill="none" stroke="#2b0505"/></svg></div>
            <div class="srow"><button class="btn sb gray">Selection 02</button></div>
          </div>
        </div>
        <div class="group">
          <div class="ghead"><svg width="16" height="16"><use href="#tape"/></svg>Control</div>
          <div class="gbody ctl">
            <button class="btn"><svg width="16" height="16"><use href="#tape"/></svg>Reset selection</button>
            <button class="btn"><svg width="16" height="16"><use href="#t-dia"/></svg>Toggle direct dimensions</button>
            <button class="btn"><svg width="16" height="16"><use href="#t-ort"/></svg>Toggle orthogonal dimensions</button>
            <button class="btn"><svg width="16" height="16"><use href="#t-x"/></svg>Clear all dimensions</button>
          </div>
        </div>
      </div></div>
      <div class="btabs"><span class="bt sel">Combo View</span><span class="bt">Selection view</span></div>
    </aside>

    <div class="center">
      <svg class="view" width="1361" height="720" viewBox="559 201 1361 720">
        <rect x="559" y="201" width="1361" height="720" fill="#d0e8e2"/>
        <path d="M559 616L1497 921H559Z" fill="#d9ede0"/>
        <path d="M570 619L1492 919" stroke="#3399f5" stroke-width="2" stroke-dasharray="4 12.820"/>
        <path d="M559 838L629 861.500L813 921H559Z" fill="#a9bfd2"/>
        <path d="M629 861.500L813 921H731.500L621 886Z" fill="#54697c"/>
        <path d="M559 838L813 921M621 886L731.500 921M629 861L610 921" fill="none" stroke="#1c3247" stroke-width="1.600"/>

        <g transform="translate(1360 410) scale(.33333)">
          <g id="peg" stroke="#1c3247" stroke-width="5">
            <path d="M1144 188L1462 291L1366 579L1050 478Z" fill="#a6bcd5"/>
            <path d="M1050 478L1366 579L1281 837L964 734Z" fill="#54697f"/>
            <path d="M1251 115L1166 355C1152 420 1195 470 1258 471C1310 472 1343 440 1348 405L1434 155Z" fill="url(#gCyl)"/>
            <ellipse cx="1344" cy="129" rx="92" ry="85" transform="rotate(12 1344 129)" fill="#c7e1f6"/>
          </g>
          <use href="#peg" x="-900" y="619"/>
          <g stroke-width="3" fill="none">
            <path d="M738 375L1050 478M738 375L563 910M1098 333L1166 355M445 1033L513 1055" stroke="#10e23c"/>
            <path d="M1050 478L563 910" stroke="#c8243c"/>
          </g>
          <path d="M738 375L708 403L722 418L741 412Z" fill="#15783f"/><path d="M738 375L757 372L750 386ZM1050 478L1034 465L1030 480Z" fill="#10b23c"/>
          <path d="M1050 478L1005 490L1033 519Z" fill="#6b2a40"/><path d="M1050 478L1015 502L1033 519Z" fill="#a02638"/>
          <path d="M563 910L578 870L603 885V902Z" fill="#cf2740"/>
          <path d="M563 910L552 874L567 869L582 876Z" fill="#10e23c"/>
          <g class="dim">
            <text x="926" y="350">1.10 mm</text>
            <text x="686" y="431">5.00 mm</text>
            <text class="red" x="573" y="701">10.56 mm</text>
            <text x="443" y="647">9.30 mm</text>
            <text x="279" y="1038">1.10 mm</text>
          </g>
        </g>

        <g transform="translate(1760 190) scale(.33333)" stroke-width="3">
          <path d="M208 20L158 180L472 283L500 283V20Z" fill="#54697f" stroke="#1c3a57" stroke-width="6"/>
          <path d="M258 102L405 149" stroke="#f00" stroke-width="6"/>
          <g fill="#e6eef6" fill-opacity=".5" stroke="#000">
            <path d="M200 135L245 124L262 124L348 152L375 180L380 205L354 285L330 358L300 373H280L190 345L160 322L148 300L152 288L172 235Z"/>
            <path fill="none" d="M218 150L236 137L330 164L350 184L354 204L327 278L302 290L208 262L196 232ZM200 135L218 150M245 124L236 137M348 152L330 164M375 180L350 184M380 205L354 204M172 235L196 232M152 288L172 290L208 262M172 290L208 285L298 318L302 290M172 290L160 322M298 318L312 328L300 373M312 328L334 322L350 292L327 278M334 322L330 358"/>
            <path d="M229 91L264 52L298 91ZM66 249L106 214V283ZM421 214L461 249L421 283ZM229 406H299L264 446Z"/>
            <circle cx="436" cy="77" r="20"/>
            <path d="M367 371L398 361L428 371V408L398 418L367 408ZM367 371L398 383L428 371M398 383V418"/>
            <path d="M210 74Q165 78 130 118L118 110L116 155L155 146L145 137Q170 100 212 97ZM317 72Q350 78 398 115L409 108L411 153L370 140L381 131Q350 100 317 95Z"/>
          </g>
          <path d="M404 155L362 284" stroke="#00f" stroke-width="6"/>
          <text class="cube" transform="translate(285 198) rotate(195)" text-anchor="middle" textLength="124" lengthAdjust="spacingAndGlyphs">FRONT</text>
          <text class="cube top" transform="translate(237 322) rotate(194)" text-anchor="middle" textLength="76" lengthAdjust="spacingAndGlyphs">TOP</text>
        </g>

        <g transform="translate(1640 860) scale(.33333)">
          <path d="M730 73L680 58" stroke="#8b1a1a" stroke-width="4"/><path d="M663 53L688 50L684 67Z" fill="#8b1a1a"/>
          <path d="M727 88L712 130" stroke="#1a1a8b" stroke-width="4"/><path d="M708 120H722L709 146Z" fill="#1a1a8b"/><circle cx="725" cy="90" r="5" fill="#1a7a2a"/>
          <g class="ax"><text x="661" y="47">X</text><text x="724" y="93">y</text><text x="709" y="144">Z</text></g>
        </g>
      </svg>
      <div class="docs">
        <span class="doc a"><svg width="17" height="17"><use href="#fc"/></svg><span>Start page</span><svg width="12" height="12"><use href="#x"/></svg></span>
        <span class="doc b sel"><svg width="17" height="17"><use href="#fc"/></svg><span>parte-superiorv31207 : 1*</span><svg width="12" height="12"><use href="#x"/></svg></span>
        <span class="doc c"><svg width="17" height="17"><use href="#fc"/></svg><span>parte-superior-redisenada : 1*</span><svg width="12" height="12"><use href="#x"/></svg></span>
      </div>
    </div>
  </div>

  <div class="split"></div>
  <div class="dtitle rep"><span>Report view</span><span class="rbtn"><svg width="12" height="12"><use href="#flt"/></svg><svg width="12" height="12"><use href="#cls"/></svg></span></div>
  <div class="report"><pre>DeltaZ 0
shape type on object1 is: Vertex
shape type on object2 is: Edge</pre><div class="scroll"><i class="up"></i><i class="thumb"></i><i class="grow"></i><i class="dn"></i></div></div>
  <footer class="status"><span class="msg">Preselected: parte_superiorv31207.Box.Face3 (67.179314 mm, -34.400002 mm, 79.143478 mm)</span><span class="nav"><svg width="10" height="14" viewBox="0 0 10 14"><rect x=".8" y=".8" width="8.400" height="12.400" rx="3.500" fill="none" stroke="#333" stroke-width="1.400"/><path d="M5 3V6" stroke="#333" stroke-width="1.600"/></svg><span>Blender</span><i class="d"></i></span><span class="size"><span>61.42 mm x 32.49 mm</span><i class="d"></i></span></footer>
</section>
</div>
</div>
</body>
</html>
```

FILE: styles.css
```css
* { box-sizing: border-box; }
body { margin: 0; width: 1920px; height: 1080px; overflow: hidden; background: #efefef; color: #111; font: 13.33px/16px "DejaVu Sans Condensed", "DejaVu Sans", sans-serif; font-stretch: condensed; }
.defs { position: absolute; }
svg { display: block; flex: none; }
.desktop { display: flex; flex-direction: column; width: 1920px; height: 1080px; }
.main { display: flex; flex: 1; min-height: 0; }

/* top bar */
.topbar { display: grid; grid-template-columns: 118px 21px 1fr auto 1fr; align-items: center; height: 27px; background: #131313; color: #f0f0f0; font-size: 14.67px; flex: none; }
.tb-act { padding-left: 18px; letter-spacing: .1px; }
.tb-ico { width: 15px; height: 16px; }
.tb-clock { display: flex; gap: 8px; align-items: center; padding-right: 33px; }
.tb-clock svg { margin-left: 10px; }
.tb-sys { display: flex; gap: 13px; justify-content: flex-end; align-items: center; padding-right: 15px; }

/* launcher */
.dock { width: 70px; flex: none; display: flex; flex-direction: column; align-items: center; overflow: hidden;
  background: linear-gradient(#142f49 0, #1a3850 180px, #1e3a52 380px, #22394c 480px, #43484c 510px, #2a3945 535px, #1f2a35 570px, #14181a 585px, #3a3620 600px, #2f2b1a 640px, #3b3220 665px, #222413 700px, #191d10 760px, #0f130b 850px, #0d110a 930px, #1d230b 965px, #343c14 985px, #2f3210 1053px); }
.di { width: 64px; height: 64px; margin-bottom: 4px; display: flex; align-items: center; justify-content: center; position: relative; flex: none; border-radius: 12px; }
.di svg { overflow: visible; }
.store { padding-bottom: 4px; }
.di.on { background: rgba(255,255,255,.17); }
.run { position: absolute; left: 0; top: 29px; width: 6px; height: 6px; border-radius: 50%; background: #e95420; }
.dsep { width: 48px; height: 1px; margin: -1px 0 3px; background: #55575c; flex: none; }
.trash { margin-top: 10px; height: 16px; }
.apps { margin-top: 19px; }
.q { font: 34px "Noto Sans", sans-serif; fill: #fff; }
.xx { font: bold 64px "Liberation Serif", serif; fill: #ff6a00; stroke: #f01800; stroke-width: 1.5; }
.tt { font: bold 50px "Liberation Serif", serif; fill: #0a0af0; }
.tm { font: bold 19px "Noto Sans", sans-serif; fill: #fff; }
.ssd { font: 16.5px "Noto Sans", sans-serif; fill: #858585; }

/* window */
.win { flex: 1; display: flex; flex-direction: column; min-width: 0; background: #efefef; }
.title { height: 36px; flex: none; background: #2d2d2d; border-bottom: 1px solid #1c1c1c; color: #d0d0d0; font-weight: bold; font-size: 14px; display: grid; grid-template-columns: 1fr auto 1fr; align-items: center; padding-top: 2px; }
.tname { grid-column: 2; }
.wbtn { justify-self: end; margin-right: 11px; }
.menu { display: flex; gap: 14.5px; height: 21px; flex: none; padding: 2px 0 0 10px; align-items: center; border-bottom: 1px solid #cdcdcd; }
.menu u, .btn u { text-underline-offset: 2px; }
.bar { height: 39px; flex: none; display: flex; align-items: center; background: linear-gradient(#f9f9f9, #ececec); border-bottom: 1px solid #b4b4b4; }
.bar.last { height: 38px; }
.bar > svg { width: 24px; height: 24px; margin: 0 4.5px; }
.dis { filter: grayscale(1) opacity(.6); }
.h { width: 16px; height: 17px; flex: none; background: radial-gradient(circle, #bcbcbc 35%, transparent 45%) 8px 0 / 3px 3px; background-clip: content-box; padding: 0 3px 0 8px; }
.h.f { width: 12px; padding: 0 2px 0 5px; }
.h.wide { width: 17px; padding-right: 4px; }
.s { width: 7px; height: 20px; flex: none; background: linear-gradient(90deg, #c8c8c8 1px, #fff 1px) 3px 0 / 2px 100% no-repeat; }
.d { width: 12px; flex: none; display: flex; justify-content: center; }
.d::after { content: ""; border: 3.5px solid transparent; border-top: 4px solid #5b5b5b; border-bottom: 0; }
.d.off::after { border-top-color: #c6c6c6; }
.combo { width: 172px; height: 25px; border: 1px solid #a9a9a9; border-radius: 3px; background: linear-gradient(#fff, #ebebeb); display: flex; align-items: center; padding: 0 5px; gap: 3px; flex: none; }
.combo svg { width: 16px; height: 16px; }
.combo span { flex: 1; padding-top: 1px; }

.g { fill: #adadad; stroke: #858585; stroke-linejoin: round; }
.gd { fill: #939393; stroke: #777; stroke-linejoin: round; }
.gl { fill: #d6d6d6; stroke: #858585; stroke-linejoin: round; }
.gn { fill: none; stroke: #808080; }
.gt { fill: none; stroke: #909090; stroke-width: 2; }

/* side panel */
.work { display: flex; height: 753px; flex: none; }
.side { width: 489px; display: flex; flex-direction: column; background: radial-gradient(circle, #b0b0b0 40%, transparent 50%) 485px 370px / 3px 3px no-repeat; flex: none; }
.dtitle { height: 20px; padding: 1px 7px 0 4px; display: flex; justify-content: space-between; align-items: center; flex: none; }
.tabs { height: 26px; margin-top: 1px; display: flex; align-items: flex-end; }
.tab { height: 24px; width: 61px; border: 1px solid #b5b5b5; border-bottom: 0; border-radius: 3px 3px 0 0; background: linear-gradient(#e9e9e9, #dedede); display: flex; align-items: center; justify-content: center; gap: 5px; }
.tab:first-child { padding-right: 2px; }
.tab.sel { width: 76px; height: 27px; margin-bottom: -1px; background: linear-gradient(#fff, #fbfbfb); z-index: 1; padding-right: 2px; border-color: #a8a8a8; }
.side .dtitle { padding-right: 7.5px; }
.pane { margin-left: 1px; width: 482px; height: 679px; flex: none; border: 1px solid #a8a8a8; padding: 1px; background: #fafafa; }
.inner { height: 100%; border: 1px solid #b5b5b5; background: linear-gradient(#c9c9c9 0, #9f9f9f 205px); padding: 16px 8px 0 7px; display: flex; flex-direction: column; }
.btn { font: inherit; color: #111; height: 24px; padding: 1px 0 0; border: 1px solid #a9a9a9; border-radius: 3px; background: linear-gradient(#fff, #ebebeb); display: flex; align-items: center; justify-content: center; gap: 2px; }
.close { width: 80px; align-self: center; gap: 4px; flex: none; }
.group { margin-bottom: 8px; }
.group.one { margin-top: 17px; }
.ghead { height: 25px; border: 1px solid #fff; border-radius: 4px 4px 0 0; background: linear-gradient(90deg, #308cc6, #68c4ff); color: #fff; font-weight: bold; display: flex; align-items: center; gap: 2px; padding-left: 5px; }
.gbody { background: #efefef; height: 192px; padding: 13px 14px; }
.gbody.ctl { height: 141px; display: flex; flex-direction: column; gap: 6px; }
.ctl .btn { padding: 1px 3px 0 0; }
.srow { display: flex; align-items: center; gap: 16px; height: 24px; margin-bottom: 6px; }
.sb { width: 83px; height: 23px; }
.sb.down { background: #dbdbdb; border-color: #9c9c9c; }
.sb.gray { color: #bebebe; border-color: #c4c4c4; }
.btabs { margin-top: 1px; width: 483px; height: 26px; border-top: 1px solid #b4b4b4; display: flex; align-items: flex-start; }
.bt { width: 111px; height: 22px; border: 1px solid #b5b5b5; border-top: 0; border-radius: 0 0 3px 3px; background: #dcdcdc; display: flex; align-items: center; justify-content: center; }
.bt.sel { width: 99px; height: 25px; background: #f8f8f8; margin-top: -1px; padding-top: 2px; }

/* document area */
.center { flex: 1; padding-top: 1px; }
.docs { height: 31px; display: flex; align-items: flex-start; background: linear-gradient(#b5b5b5, #b5b5b5) 0 1px / 100% 1px no-repeat; }
.doc { height: 28px; margin-top: 1px; border: 1px solid #b5b5b5; border-radius: 0 0 3px 3px; background: #dcdcdc; display: flex; align-items: center; padding: 1px 0 0 10px; }
.doc svg:first-child { margin-right: 3px; }
.doc span { flex: 1; white-space: nowrap; }
.doc.a { width: 132px; padding-right: 16px; }
.doc.b { width: 226px; padding-right: 17px; padding-left: 11px; }
.doc.c { width: 248px; padding-right: 16px; padding-left: 10px; }
.doc.sel { height: 31px; margin-top: 0; border-top: 0; background: linear-gradient(#efefef, #fbfbfb); padding-top: 2px; }
.dim text { font: 90.5px "DejaVu Sans", sans-serif; font-stretch: normal; fill: #10e23c; stroke: none; }
.dim .red { fill: #d0213c; }
.cube { font: 36px "DejaVu Sans", sans-serif; fill: #333; stroke: none; }
.cube.top { font-size: 24px; fill: #555; }
.ax { font: 28px "DejaVu Sans", sans-serif; fill: #000; }

/* report view */
.split { height: 5px; background: radial-gradient(circle, #b0b0b0 40%, transparent 50%) 918px 1px / 3px 3px repeat-x; clip-path: inset(0 915px 0 918px); flex: none; }
.rep { padding-right: 2px; }
.rbtn { display: flex; gap: 2px; }
.report { height: 74px; flex: none; border: 1px solid #b4b4b4; border-right: 0; background: #fff; display: flex; justify-content: space-between; overflow: hidden; }
pre { margin: -9px 0 0 51px; font: 13px/16px "Liberation Mono", monospace; color: #333; }
.scroll { width: 15px; border-left: 1px solid #b4b4b4; display: flex; flex-direction: column; }
.scroll i { display: flex; align-items: center; justify-content: center; }
.up, .dn { height: 14px; background: #fbfbfb; }
.up { border-bottom: 1px solid #b4b4b4; }
.dn { border-top: 1px solid #b4b4b4; }
.up::after { content: ""; border: 3.5px solid transparent; border-bottom: 4px solid #5b5b5b; border-top: 0; }
.dn::after { content: ""; border: 3.5px solid transparent; border-top: 4px solid #5b5b5b; border-bottom: 0; }
.thumb { height: 17px; background: #e2e2e2; border-bottom: 1px solid #b4b4b4; }
.grow { flex: 1; background: linear-gradient(90deg, #e8e8e8, #fff); }
.status { flex: 1; display: flex; align-items: center; padding: 2px 3px 0 2px; }
.msg { flex: 1; }
.nav, .size { display: flex; align-items: center; }
.nav span { margin: 0 6px 0 5px; }
.size { margin-left: 12px; }
.size span { margin-right: 2px; }
```
